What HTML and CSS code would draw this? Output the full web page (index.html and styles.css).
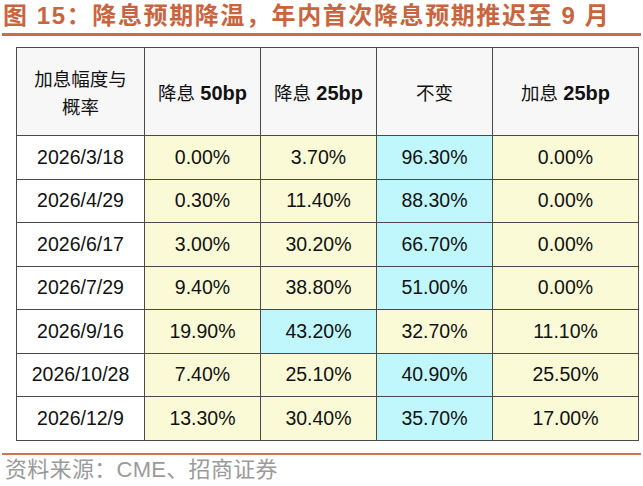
FILE: index.html
```html
<!DOCTYPE html>
<html lang="zh">
<head>
<meta charset="utf-8">
<link rel="stylesheet" href="styles.css">
</head>
<body>
<div class="page">
  <div class="title">图 15：降息预期降温，年内首次降息预期推迟至 9 月</div>
  <div class="rule"></div>
  <div class="table-wrap">
    <table class="grid">
      <colgroup>
        <col class="c1"><col class="c2"><col class="c3"><col class="c4"><col class="c5">
      </colgroup>
      <thead>
        <tr>
          <th><span class="cjk">加息幅度与<br>概率</span></th>
          <th><span class="cjk">降息</span> <b>50bp</b></th>
          <th><span class="cjk">降息</span> <b>25bp</b></th>
          <th><span class="cjk">不变</span></th>
          <th><span class="cjk">加息</span> <b>25bp</b></th>
        </tr>
      </thead>
      <tbody>
        <tr><td class="d">2026/3/18</td><td class="y">0.00%</td><td class="y">3.70%</td><td class="b">96.30%</td><td class="y">0.00%</td></tr>
        <tr><td class="d">2026/4/29</td><td class="y">0.30%</td><td class="y">11.40%</td><td class="b">88.30%</td><td class="y">0.00%</td></tr>
        <tr><td class="d">2026/6/17</td><td class="y">3.00%</td><td class="y">30.20%</td><td class="b">66.70%</td><td class="y">0.00%</td></tr>
        <tr><td class="d">2026/7/29</td><td class="y">9.40%</td><td class="y">38.80%</td><td class="b">51.00%</td><td class="y">0.00%</td></tr>
        <tr><td class="d">2026/9/16</td><td class="y">19.90%</td><td class="b">43.20%</td><td class="y">32.70%</td><td class="y">11.10%</td></tr>
        <tr><td class="d">2026/10/28</td><td class="y">7.40%</td><td class="y">25.10%</td><td class="b">40.90%</td><td class="y">25.50%</td></tr>
        <tr><td class="d">2026/12/9</td><td class="y">13.30%</td><td class="y">30.40%</td><td class="b">35.70%</td><td class="y">17.00%</td></tr>
      </tbody>
    </table>
  </div>
  <div class="rule bottom"></div>
  <div class="source">资料来源：CME、招商证券</div>
</div>
</body>
</html>
```
FILE: styles.css
```css
html, body {
  margin: 0;
  padding: 0;
  background: #ffffff;
}
.page {
  width: 643px;
  height: 486px;
  overflow: hidden;
  font-family: "Liberation Sans", Arial, "Noto Sans CJK SC", sans-serif;
}
.title {
  padding: 2px 0 0 3px;
  height: 31px;
  box-sizing: border-box;
  font-family: "Liberation Sans", "Noto Sans CJK SC", sans-serif;
  font-weight: bold;
  font-size: 24px;
  line-height: 28px;
  letter-spacing: 1.6px;
  color: #C8653F;
  white-space: nowrap;
}
.rule {
  margin: 2px 2px 0 2px;
  height: 3px;
  background: #CF6C48;
}
.table-wrap {
  padding: 11px 0 0 16px;
}
.grid {
  border-collapse: collapse;
  table-layout: fixed;
  width: 622px;
  color: #111;
}
.c1 { width: 128px; }
.c2 { width: 116px; }
.c3 { width: 116px; }
.c4 { width: 116px; }
.c5 { width: 146px; }
.grid th, .grid td {
  border: 1px solid #4a4a4a;
  text-align: center;
  padding: 0;
}
.grid th {
  height: 87px;
  background: #F7F7F7;
  font-weight: normal;
  font-size: 19px;
}
.grid th b {
  font-weight: bold;
  font-size: 20px;
}
.cjk {
  font-family: "Noto Sans CJK SC", sans-serif;
  font-size: 18.5px;
  line-height: 28px;
}
.grid td {
  height: 42.5px;
  font-size: 19.5px;
}
.grid td.d { background: #ffffff; }
.grid td.y { background: #FAFAD6; }
.grid td.b { background: #BFF7FD; }
.rule.bottom {
  margin-top: 12px;
  height: 2px;
  background: #D27451;
}
.source {
  padding: 2px 0 0 5px;
  font-family: "Liberation Sans", "Noto Sans CJK SC", sans-serif;
  font-size: 22px;
  line-height: 26px;
  letter-spacing: 0.3px;
  color: #9a9a9a;
}
```
